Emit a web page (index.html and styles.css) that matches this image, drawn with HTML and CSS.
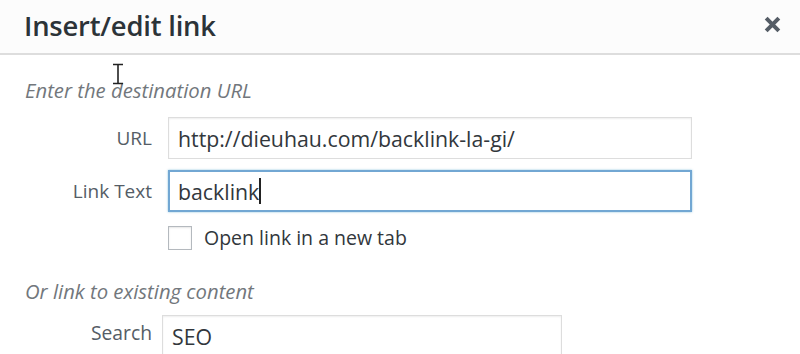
FILE: index.html
```html
<!DOCTYPE html>
<html>
<head>
<meta charset="utf-8">
<link rel="stylesheet" href="styles.css">
</head>
<body>
<div class="dialog">
  <div class="header">
    <h1 class="title">Insert/edit link</h1>
    <button class="close" aria-label="Close">
      <svg width="19" height="19" viewBox="0 0 18 18"><path d="M3 3 L15 15 M15 3 L3 15" stroke="#555d66" stroke-width="3.8" stroke-linecap="butt"/></svg>
    </button>
  </div>
  <div class="body">
    <p class="hint first">Enter the destination URL</p>
    <div class="form">
      <label class="label">URL</label>
      <div class="input">http://dieuhau.com/backlink-la-gi/</div>
      <label class="label">Link Text</label>
      <div class="input focus">backlink<span class="caret"></span></div>
      <span></span>
      <div class="check-row"><span class="checkbox"></span><span class="check-label">Open link in a new tab</span></div>
    </div>
    <p class="hint second">Or link to existing content</p>
    <div class="search-row">
      <label class="label search-label">Search</label>
      <div class="input search">SEO</div>
    </div>
  </div>
  <svg class="ibeam" width="12" height="22" viewBox="0 0 12 22"><path d="M1 1.5 H11 M6 1.5 V20.5 M1 20.5 H11" stroke="#222" stroke-width="1.6" fill="none"/></svg>
</div>
</body>
</html>
```

FILE: styles.css
```css
* { box-sizing: border-box; }
html, body { margin: 0; padding: 0; background: #fff; }
body { font-family: "Open Sans", "Noto Sans", sans-serif; width: 800px; height: 354px; overflow: hidden; }
.dialog { position: relative; width: 800px; height: 354px; }
.header {
  height: 55px;
  background: #fcfcfc;
  border-bottom: 2px solid #dddddd;
  display: flex;
  align-items: center;
  justify-content: space-between;
  padding: 0 18px 0 24px;
}
.title {
  margin: 0;
  font-size: 27.4px;
  font-weight: 600;
  color: #2c3338;
  letter-spacing: -0.2px;
  padding-bottom: 2px;
}
.close {
  border: 0; background: none; padding: 0; width: 19px; height: 19px;
  display: flex; margin-bottom: 4px;
}
.body { padding: 0 0 0 25px; }
.hint {
  margin: 0;
  font-style: italic;
  font-size: 20.3px;
  line-height: 26px;
  color: #72777c;
}
.hint.first { margin-top: 22px; }
.form {
  margin-top: 14px;
  display: grid;
  grid-template-columns: 127px 524px;
  column-gap: 16px;
  row-gap: 11px;
  align-items: center;
}
.label {
  text-align: right;
  font-size: 19px;
  color: #555d66;
}
.input {
  height: 42px;
  border: 1px solid #dddddd;
  box-shadow: inset 0 1px 2px rgba(0,0,0,0.07);
  font-size: 21.3px;
  color: #32373c;
  padding: 0 9px;
  display: flex;
  align-items: center;
  background: #fff;
}
.input.focus {
  border: 2px solid #72a7d3;
  padding: 0 8px;
  box-shadow: 0 0 2px rgba(30,140,190,0.5);
}
.caret { display: inline-block; width: 1.5px; height: 26px; background: #222; margin-left: 0; }
.check-row { display: flex; align-items: center; gap: 12px; margin-top: 1px; }
.checkbox {
  width: 24px; height: 24px;
  border: 1px solid #b4b9be;
  box-shadow: inset 0 1px 2px rgba(0,0,0,0.1);
  background: #fff;
  flex: none;
}
.check-label { font-size: 19.5px; color: #32373c; }
.hint.second { margin-top: 27px; }
.search-row {
  margin-top: 11px;
  display: grid;
  grid-template-columns: 127px 400px;
  column-gap: 10px;
  align-items: start;
}
.search-label { line-height: 42px; margin-top: -3px; font-size: 19.3px; }
.input.search { height: 48px; align-items: flex-start; padding-top: 6px; }
.ibeam { position: absolute; left: 112px; top: 63px; }
```
